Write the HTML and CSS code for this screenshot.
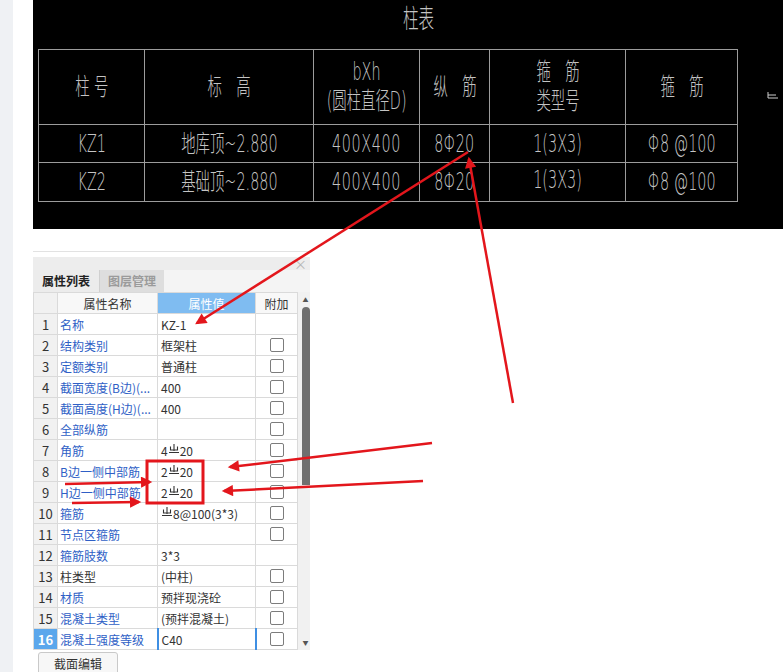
FILE: index.html
```html
<!DOCTYPE html>
<html lang="zh-CN">
<head>
    <meta charset="UTF-8">
    <meta name="viewport" content="width=device-width, initial-scale=1.0">
    <title>柱表</title>
    <link rel="stylesheet" href="styles.css">
</head>
<body>
    <div class="side"></div>

    <div class="main">
        <!-- CAD 柱表 -->
        <div class="cad">
            <div class="cad-title"><span class="t">柱表</span></div>
            <div class="cad-body">
                <table class="cad-table">
                    <colgroup>
                        <col style="width:106px">
                        <col style="width:169px">
                        <col style="width:106px">
                        <col style="width:70px">
                        <col style="width:136px">
                        <col style="width:112px">
                    </colgroup>
                    <tr class="head">
                        <td><div class="c"><span class="t">柱 号</span></div></td>
                        <td><div class="c"><span class="t">标　高</span></div></td>
                        <td><div class="c"><span class="t">bXh</span><span class="t">(圆柱直径D)</span></div></td>
                        <td><div class="c"><span class="t">纵　筋</span></div></td>
                        <td><div class="c"><span class="t">箍　筋</span><span class="t">类型号</span></div></td>
                        <td><div class="c"><span class="t">箍　筋</span></div></td>
                    </tr>
                    <tr class="r1">
                        <td><div class="c"><span class="t">KZ1</span></div></td>
                        <td><div class="c"><span class="t">地库顶~2.880</span></div></td>
                        <td><div class="c"><span class="t sp">400X400</span></div></td>
                        <td><div class="c"><span class="t">8Φ20</span></div></td>
                        <td><div class="c"><span class="t">1(3X3)</span></div></td>
                        <td><div class="c"><span class="t">Φ8 @100</span></div></td>
                    </tr>
                    <tr class="r2">
                        <td><div class="c"><span class="t">KZ2</span></div></td>
                        <td><div class="c"><span class="t">基础顶~2.880</span></div></td>
                        <td><div class="c"><span class="t sp">400X400</span></div></td>
                        <td><div class="c"><span class="t">8Φ20</span></div></td>
                        <td><div class="c up"><span class="t">1(3X3)</span></div></td>
                        <td><div class="c"><span class="t">Φ8 @100</span></div></td>
                    </tr>
                </table>
                <svg class="cad-mark" width="12" height="7" viewBox="0 0 12 7">
                    <path d="M1 0 V6 H11 M1 3 H9" stroke="#cfcfcf" stroke-width="1" fill="none"/>
                </svg>
            </div>
        </div>

        <!-- 属性面板 -->
        <div class="panel">
            <div class="panel-bar"><span class="close">×</span></div>
            <div class="tabs">
                <div class="tab on">属性列表</div>
                <div class="tab">图层管理</div>
            </div>
            <div class="grid-wrap">
                <table class="grid">
                    <colgroup>
                        <col style="width:24px">
                        <col style="width:100px">
                        <col style="width:98px">
                        <col style="width:42px">
                    </colgroup>
                    <tr class="grid-head">
                        <td class="num"></td>
                        <td class="hc">属性名称</td>
                        <td class="hc hv">属性值</td>
                        <td class="hc">附加</td>
                    </tr>
                    <tr><td class="num">1</td><td class="name">名称</td><td>KZ-1</td><td></td></tr>
                    <tr><td class="num">2</td><td class="name">结构类别</td><td>框架柱</td><td><i class="cb"></i></td></tr>
                    <tr><td class="num">3</td><td class="name">定额类别</td><td>普通柱</td><td><i class="cb"></i></td></tr>
                    <tr><td class="num">4</td><td class="name">截面宽度(B边)(...</td><td>400</td><td><i class="cb"></i></td></tr>
                    <tr><td class="num">5</td><td class="name">截面高度(H边)(...</td><td>400</td><td><i class="cb"></i></td></tr>
                    <tr><td class="num">6</td><td class="name">全部纵筋</td><td></td><td><i class="cb"></i></td></tr>
                    <tr><td class="num">7</td><td class="name">角筋</td><td>4<svg class="bar" viewBox="0 0 10 10"><path d="M5 0 V7 M1.5 2.5 V6 H8.5 V2.5 M0 8.5 H10"/></svg>20</td><td><i class="cb"></i></td></tr>
                    <tr><td class="num">8</td><td class="name">B边一侧中部筋</td><td>2<svg class="bar" viewBox="0 0 10 10"><path d="M5 0 V7 M1.5 2.5 V6 H8.5 V2.5 M0 8.5 H10"/></svg>20</td><td><i class="cb"></i></td></tr>
                    <tr><td class="num">9</td><td class="name">H边一侧中部筋</td><td>2<svg class="bar" viewBox="0 0 10 10"><path d="M5 0 V7 M1.5 2.5 V6 H8.5 V2.5 M0 8.5 H10"/></svg>20</td><td><i class="cb"></i></td></tr>
                    <tr><td class="num">10</td><td class="name">箍筋</td><td><svg class="bar" viewBox="0 0 10 10"><path d="M5 0 V7 M1.5 2.5 V6 H8.5 V2.5 M0 8.5 H10"/></svg>8@100(3*3)</td><td><i class="cb"></i></td></tr>
                    <tr><td class="num">11</td><td class="name">节点区箍筋</td><td></td><td><i class="cb"></i></td></tr>
                    <tr><td class="num">12</td><td class="name">箍筋肢数</td><td>3*3</td><td></td></tr>
                    <tr><td class="num">13</td><td class="name plain">柱类型</td><td>(中柱)</td><td><i class="cb"></i></td></tr>
                    <tr><td class="num">14</td><td class="name">材质</td><td>预拌现浇砼</td><td><i class="cb"></i></td></tr>
                    <tr><td class="num">15</td><td class="name">混凝土类型</td><td>(预拌混凝土)</td><td><i class="cb"></i></td></tr>
                    <tr class="sel"><td class="num">16</td><td class="name">混凝土强度等级</td><td class="edit">C40</td><td><i class="cb"></i></td></tr>
                </table>
                <div class="scroll">
                    <div class="arr">▲</div>
                    <div class="thumb"></div>
                    <div class="fill"></div>
                    <div class="arr">▼</div>
                </div>
            </div>
            <button class="btn">截面编辑</button>
        </div>
    </div>

    <!-- 标注箭头 -->
    <svg class="marks" width="783" height="672" viewBox="0 0 783 672">
        <defs>
            <marker id="ah" viewBox="0 0 10 10" refX="8" refY="5" markerWidth="7" markerHeight="4.5" orient="auto" markerUnits="strokeWidth">
                <path d="M0 0 L10 5 L0 10 z" fill="#e3161c"/>
            </marker>
        </defs>
        <g stroke="#e3161c" stroke-width="2.5" fill="none" marker-end="url(#ah)">
            <line x1="468" y1="152" x2="197" y2="323"/>
            <line x1="513" y1="403" x2="469" y2="159"/>
            <line x1="432" y1="443" x2="230" y2="467"/>
            <line x1="423" y1="481" x2="224" y2="491"/>
            <line x1="65" y1="484" x2="150" y2="482"/>
            <line x1="72" y1="503" x2="139" y2="502"/>
        </g>
        <rect x="147" y="461" width="56" height="42" fill="none" stroke="#e3161c" stroke-width="3"/>
    </svg>
</body>
</html>
```

FILE: styles.css
```css
/* Geral */
* {
    margin: 0;
    padding: 0;
    box-sizing: border-box;
}

body {
    width: 783px;
    height: 672px;
    overflow: hidden;
    display: flex;
    position: relative;
    background: #fff;
    font-family: "Noto Sans CJK SC", sans-serif;
}

.side {
    width: 13px;
    flex-shrink: 0;
    background: #eff1f4;
}

.main {
    flex: 1;
    padding-left: 20px;
}

/* CAD 柱表 */
.cad {
    width: 750px;
    height: 229px;
    background: #000;
    color: #c4c4c4;
    font-family: "DejaVu Sans", "Noto Sans CJK SC", sans-serif;
    font-weight: 200;
}

.t {
    display: inline-block;
    transform: scaleX(0.6);
    white-space: nowrap;
}

.t.sp {
    letter-spacing: 1px;
}

.cad-title {
    height: 49px;
    padding-left: 370px;
    font-size: 26px;
    line-height: 38px;
}

.cad-title .t {
    transform-origin: left center;
}

.cad-body {
    display: flex;
    padding-left: 5px;
}

.cad-table {
    border-collapse: collapse;
    table-layout: fixed;
    width: 699px;
}

.cad-table td {
    border: 1px solid #9c9c9c;
    padding: 0;
    font-size: 24px;
    vertical-align: middle;
}

.cad-table .c {
    display: flex;
    flex-direction: column;
    align-items: center;
}

.cad-table .head td {
    height: 75px;
    line-height: 29px;
}

.cad-table .r1 td {
    height: 38px;
    line-height: 30px;
}

.cad-table .r2 td {
    height: 39px;
    line-height: 30px;
}

.cad-table .c.up {
    margin-top: -4px;
}

.cad-mark {
    margin: 43px 0 0 29px;
}

/* 属性面板 */
.panel {
    width: 277px;
    margin-top: 22px;
    border-top: 1px solid #e2e2e2;
    padding-top: 5px;
    font-size: 12px;
    color: #333;
}

.panel-bar {
    height: 13px;
    background: #ededed;
    display: flex;
    justify-content: flex-end;
    align-items: center;
    padding-right: 3px;
}

.close {
    color: #b5b5b5;
    font-size: 13px;
    line-height: 13px;
}

.tabs {
    height: 22px;
    display: flex;
    background: #f4f4f4;
}

.tab {
    width: 65px;
    line-height: 22px;
    text-align: center;
    background: #dedede;
    color: #9b9b9b;
    font-weight: bold;
    border-left: 1px solid #d0d0d0;
}

.tab.on {
    width: 66px;
    background: #ececec;
    color: #222;
    border-left: none;
}

.grid-wrap {
    display: flex;
}

.grid {
    border-collapse: collapse;
    table-layout: fixed;
    width: 264px;
    background: #fff;
}

.grid td {
    height: 21px;
    border: 1px solid #dadada;
    padding: 0 3px;
    white-space: nowrap;
    overflow: hidden;
    vertical-align: middle;
    line-height: 19px;
}

.grid td.num {
    padding: 0;
    text-align: center;
    background: #f1f1f1;
    font-size: 13px;
}

.grid td.name {
    padding-left: 2px;
    color: #2f5fc6;
}

.grid td.name.plain {
    color: #333;
}

.grid-head td {
    background: #f8f8f8;
}

.grid-head .hc {
    text-align: center;
    font-size: 12px;
}

.grid-head .hv {
    background: #7fbcf1;
    color: #fff;
}

.bar {
    width: 10px;
    height: 10px;
    margin: 0 1px;
    vertical-align: 2px;
    stroke: #333;
    stroke-width: 1.1;
    fill: none;
}

.cb {
    display: block;
    width: 14px;
    height: 14px;
    margin: 0 auto;
    border: 1px solid #7c7c7c;
    border-radius: 2px;
    background: #fff;
}

.sel td.num {
    background: #5ba7ec;
    color: #fff;
    font-weight: bold;
}

.grid td.edit {
    border-left: 2px solid #3f8fe3;
    border-right: 2px solid #3f8fe3;
}

/* Barra de rolagem */
.scroll {
    width: 13px;
    background: #f1f1f1;
    display: flex;
    flex-direction: column;
    align-items: center;
}

.arr {
    height: 15px;
    font-size: 6px;
    line-height: 15px;
    color: #555;
    padding-left: 3px;
}

.thumb {
    width: 8px;
    height: 178px;
    margin-left: 3px;
    border-radius: 4px 4px 0 0;
    background: #6f6f6f;
}

.fill {
    flex: 1;
}

.btn {
    display: block;
    margin: 2px 0 0 5px;
    width: 80px;
    height: 28px;
    border: 1px solid #c9c9c9;
    border-radius: 3px;
    background: #f7f7f7;
    font-family: "Noto Sans CJK SC", sans-serif;
    font-size: 12px;
    color: #333;
    padding-bottom: 6px;
}

/* Setas */
.marks {
    position: absolute;
    top: 0;
    left: 0;
    pointer-events: none;
}
```
